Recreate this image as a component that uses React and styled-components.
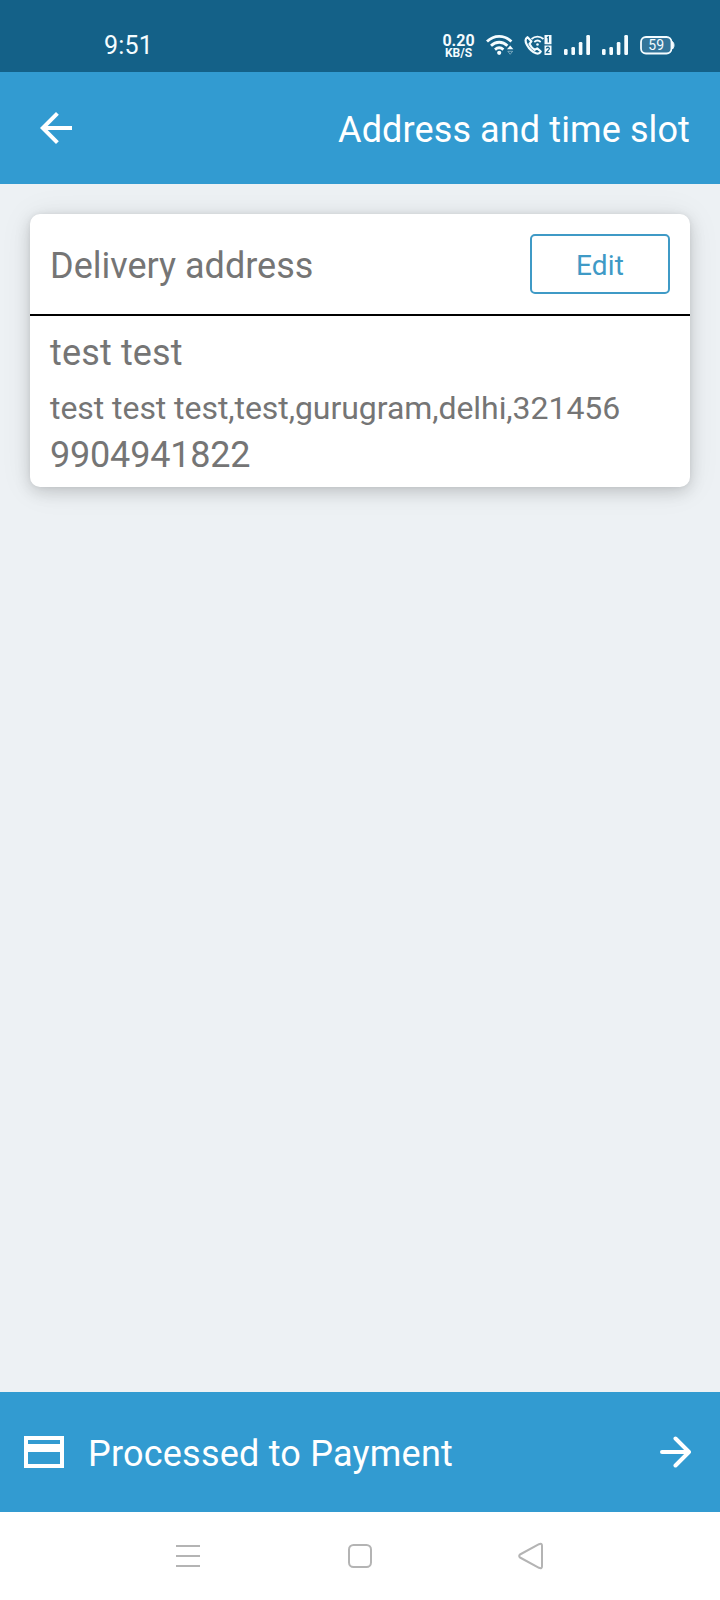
import React from "react";
import styled, { createGlobalStyle } from "styled-components";

const GlobalStyle = createGlobalStyle`
  * {
    box-sizing: border-box;
  }

  body {
    margin: 0;
    font-family: Roboto, sans-serif;
    background: #edf1f4;
  }

  svg {
    display: block;
    flex-shrink: 0;
  }
`;

const Screen = styled.div`
  width: 720px;
  height: 1600px;
  display: flex;
  flex-direction: column;
  background: #edf1f4;
  overflow: hidden;
`;

const StatusBar = styled.div`
  height: 72px;
  display: flex;
  align-items: center;
  justify-content: space-between;
  padding: 18px 45px 0 104px;
  background: #146188;
  color: #f4fcff;
`;

const Clock = styled.div`
  padding-top: 2px;
  font-size: 25px;
  line-height: 30px;
  letter-spacing: 0.2px;
`;

const StatusIcons = styled.div`
  display: flex;
  align-items: center;
`;

const NetSpeed = styled.div`
  width: 33px;
  margin-right: 11px;
  padding-top: 2px;
  text-align: center;
  font-weight: 700;
  font-size: 16px;
  line-height: 13px;
`;

const SpeedUnit = styled.div`
  font-size: 12px;
  line-height: 12px;
`;

const StatusIcon = styled.svg`
  margin-right: ${({ $gap }) => $gap || 0}px;
`;

const Header = styled.header`
  height: 112px;
  display: flex;
  align-items: center;
  justify-content: space-between;
  padding: 0 30px 0 32px;
  background: #329bd1;
  color: #fff;
`;

const Title = styled.h1`
  margin: 0;
  padding-top: 4px;
  font-size: 36px;
  line-height: 42px;
  font-weight: 400;
  letter-spacing: 0.11px;
`;

const Content = styled.main`
  flex: 1;
  padding: 30px;
`;

const Card = styled.section`
  height: 273px;
  border-radius: 10px;
  background: #fff;
  color: #757575;
  box-shadow: 0 5px 16px rgba(0, 0, 0, 0.15), 0 0 5px rgba(0, 0, 0, 0.06),
    0 2px 34px rgba(0, 0, 0, 0.07);
`;

const CardHead = styled.div`
  height: 102px;
  display: flex;
  align-items: center;
  justify-content: space-between;
  padding: 0 20px;
  border-bottom: 2px solid #000;
`;

const CardTitle = styled.h2`
  margin: 0;
  padding-top: 3px;
  font-size: 36px;
  line-height: 42px;
  font-weight: 400;
`;

const EditButton = styled.button`
  width: 140px;
  height: 60px;
  padding: 2px 0 0;
  border: 2px solid #3f9ac6;
  border-radius: 5px;
  background: #fff;
  color: #3f9ac6;
  font-family: inherit;
  font-size: 28px;
  letter-spacing: 0.2px;
`;

const CardBody = styled.div`
  display: flex;
  flex-direction: column;
  padding: 16px 20px 0;
`;

const Line = styled.div`
  font-size: 36px;
  line-height: 42px;
  letter-spacing: ${({ $spacing }) => $spacing}px;
`;

const AddressLine = styled.div`
  margin: 15px 0 7px;
  font-size: 32px;
  line-height: 38px;
  letter-spacing: -0.06px;
  white-space: nowrap;
`;

const PayBar = styled.footer`
  height: 120px;
  display: flex;
  align-items: center;
  padding: 0 28px 0 24px;
  background: #329bd1;
  color: #fff;
`;

const PayLabel = styled.div`
  flex: 1;
  padding: 3px 0 0 24px;
  font-size: 36px;
  line-height: 42px;
  letter-spacing: 0.22px;
`;

const NavBar = styled.nav`
  height: 88px;
  display: flex;
  align-items: center;
  justify-content: space-between;
  padding: 0 176px;
  background: #fff;
`;

const Signal = ({ gap }) => (
  <StatusIcon $gap={gap} width="26" height="22" fill="currentColor">
    <rect x="0" y="15" width="3.6" height="6" rx="1.2" />
    <rect x="7.4" y="13" width="3.6" height="8" rx="1.2" />
    <rect x="14.8" y="8" width="3.6" height="13" rx="1.2" />
    <rect x="22.3" y="1" width="3.7" height="20" rx="1.2" />
  </StatusIcon>
);

const WifiIcon = () => (
  <StatusIcon $gap={10} width="28" height="22" fill="none" stroke="currentColor" strokeWidth="2.8">
    <path d="M1 7.5C8 .6 18.4 .6 25.4 7.5" />
    <path d="M5 11.7c4.8-4.6 11.6-4.6 16.4 0" />
    <path d="M9 15.6c2.6-2.3 5.8-2.3 8.4 0" />
    <circle cx="13.2" cy="18.8" r="2.1" fill="currentColor" stroke="none" />
    <path d="M21 15.3l3.2-3.8 3.2 3.8z" fill="currentColor" stroke="none" />
    <path d="M21.8 17.3l2.4 3 2.4-3z" strokeWidth=".8" opacity=".55" />
  </StatusIcon>
);

const CallIcon = () => (
  <StatusIcon $gap={12} width="28" height="22" fill="none" stroke="currentColor">
    <path
      d="M3.5 3.2C1 4.5 1 7.500 3 11c2.200 4 5.500 7 9 8.300 2 .7 3.800 0 4.800-1.800l-3.600-3.100-2.500 1.500C8.500 14.500 6.700 12.300 5.500 9.900L7.400 7.300z"
      strokeWidth="2.2"
      strokeLinejoin="round"
    />
    <path d="M7.500 5c3.500-3.300 8.500-3.300 12 0M10.300 8c2-1.800 4.400-1.800 6.400 0" strokeWidth="1.8" />
    <circle cx="13.5" cy="10.5" r="1.3" fill="currentColor" stroke="none" />
    <path d="M20.500 1h7v9.300h-7zM20.500 11.500h7V21h-7z" fill="currentColor" stroke="none" />
    <path
      d="M23 3.800l1.300-.8v5.500M22.300 14.500c.3-1.800 3.200-1.600 3 .2-.1 1.200-2.200 2.500-2.900 4h3.200"
      stroke="#146188"
      strokeWidth="1.3"
    />
  </StatusIcon>
);

const BatteryIcon = () => (
  <StatusIcon width="35" height="20">
    <rect x="1" y="2" width="30.5" height="16.5" rx="5" fill="#33759a" stroke="currentColor" strokeWidth="1.8" />
    <path d="M32.500 6.500c2 2 2 5.500 0 7.500z" fill="currentColor" stroke="currentColor" />
    <text x="16.2" y="15.2" textAnchor="middle" fontSize="14" fill="currentColor">
      59
    </text>
  </StatusIcon>
);

const BackArrow = () => (
  <svg width="48" height="48" viewBox="0 0 24 24" fill="currentColor">
    <path d="M20 11H7.830l5.590-5.590L12 4l-8 8 8 8 1.410-1.410L7.830 13H20z" />
  </svg>
);

const CardIcon = () => (
  <svg width="40" height="32" fill="currentColor">
    <path fillRule="evenodd" d="M0 0h40v32H0zM4 4v4h32V4zM4 16v12h32V16z" />
  </svg>
);

const NextArrow = () => (
  <svg
    width="32"
    height="32"
    fill="none"
    stroke="currentColor"
    strokeWidth="4"
    strokeLinecap="round"
    strokeLinejoin="round"
  >
    <path d="M2 16h27M15.500 2.500L29 16 15.500 29.500" />
  </svg>
);

const App = () => {
  return (
    <>
      <GlobalStyle />
      <Screen>
        <StatusBar>
          <Clock>9:51</Clock>
          <StatusIcons>
            <NetSpeed>
              0.20
              <SpeedUnit>KB/S</SpeedUnit>
            </NetSpeed>
            <WifiIcon />
            <CallIcon />
            <Signal gap={12} />
            <Signal gap={12} />
            <BatteryIcon />
          </StatusIcons>
        </StatusBar>

        <Header>
          <BackArrow />
          <Title>Address and time slot</Title>
        </Header>

        <Content>
          <Card>
            <CardHead>
              <CardTitle>Delivery address</CardTitle>
              <EditButton type="button">Edit</EditButton>
            </CardHead>
            <CardBody>
              <Line $spacing={0.15}>test test</Line>
              <AddressLine>test test test,test,gurugram,delhi,321456</AddressLine>
              <Line $spacing={-0.2}>9904941822</Line>
            </CardBody>
          </Card>
        </Content>

        <PayBar>
          <CardIcon />
          <PayLabel>Processed to Payment</PayLabel>
          <NextArrow />
        </PayBar>

        <NavBar>
          <svg width="26" height="24" stroke="#b4b4b4" strokeWidth="2">
            <path d="M0 2h24M0 12h24M0 22h24" />
          </svg>
          <svg width="24" height="24" fill="none" stroke="#b4b4b4" strokeWidth="2">
            <rect x="1" y="1" width="22" height="22" rx="4.5" />
          </svg>
          <svg width="26" height="28" fill="none" stroke="#b4b4b4" strokeWidth="2" strokeLinejoin="round">
            <path d="M2 12.500L21 2.200q3-1.200 3 1.600v20.400q0 2.800-3 1.600L2 15.500q-1.600-1.500 0-3z" />
          </svg>
        </NavBar>
      </Screen>
    </>
  );
};

export default App;
